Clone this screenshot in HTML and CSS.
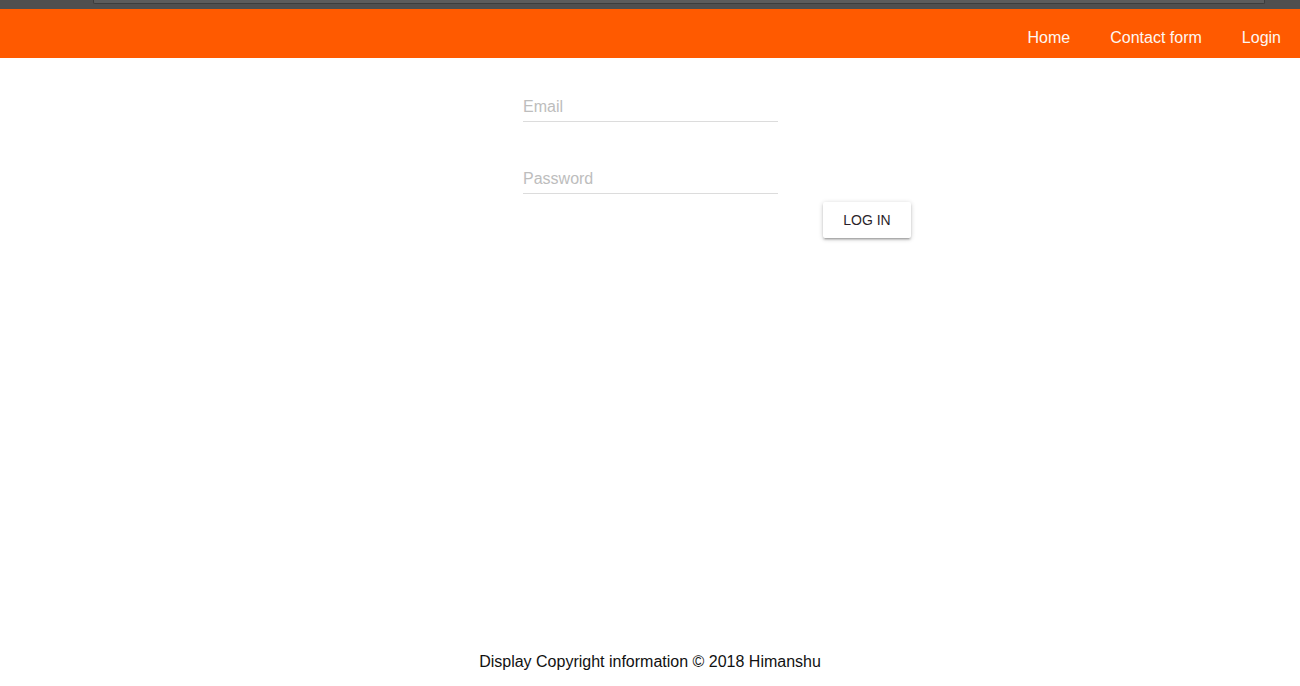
FILE: index.html
```html
<!DOCTYPE html>
<html lang="en">
<head>
<meta charset="utf-8">
<title>Login</title>
<link rel="stylesheet" href="styles.css">
</head>
<body>
<div class="page">
  <div class="chrome"><div class="chrome-bar"></div></div>
  <header class="topbar">
    <nav class="nav">
      <a class="nav-link" href="#">Home</a>
      <a class="nav-link" href="#">Contact form</a>
      <a class="nav-link" href="#">Login</a>
    </nav>
  </header>
  <main class="main">
    <form class="login-form">
      <div class="field"><input class="text-input" type="email" placeholder="Email"></div>
      <div class="field field-gap"><input class="text-input" type="password" placeholder="Password"></div>
      <div class="actions"><button class="btn" type="button">Log in</button></div>
    </form>
  </main>
  <footer class="footer">Display Copyright information © 2018 Himanshu</footer>
</div>
</body>
</html>
```
FILE: styles.css
```css
html, body {
  margin: 0;
  padding: 0;
  background: #ffffff;
  font-family: "Liberation Sans", Arial, sans-serif;
}
.page {
  display: flex;
  flex-direction: column;
  min-height: 100vh;
}
.chrome {
  height: 9px;
  background: #4f4f4f;
  padding: 0 35px 0 93px;
  box-sizing: border-box;
}
.chrome-bar {
  height: 3px;
  background: #5c5c5c;
  border: 1px solid #3d3d3d;
  border-top: none;
  border-radius: 0 0 2px 2px;
}
.topbar {
  height: 49px;
  background: #ff5a00;
  display: flex;
  justify-content: flex-end;
  align-items: center;
  padding-right: 19px;
}
.nav {
  display: flex;
  gap: 40px;
  padding-top: 14px;
  height: 38px;
  box-sizing: border-box;
}
.nav-link {
  color: #fdf7f2;
  text-decoration: none;
  font-size: 16px;
  line-height: 18px;
}
.main {
  flex: 1;
  display: flex;
  justify-content: center;
  padding-top: 31px;
  padding-left: 1px;
}
.login-form {
  width: 255px;
  margin: 0;
}
.field-gap {
  margin-top: 39px;
}
.text-input {
  display: block;
  width: 100%;
  box-sizing: border-box;
  height: 33px;
  padding: 8px 0 5px;
  border: none;
  border-bottom: 1px solid #dcdcdc;
  outline: none;
  background: transparent;
  font-family: "Liberation Sans", Arial, sans-serif;
  font-size: 16px;
  line-height: 19px;
  color: #222;
}
.text-input::placeholder {
  color: #bdbdbd;
  opacity: 1;
}
.actions {
  margin-top: 8px;
  padding-left: 300px;
}
.btn {
  width: 88px;
  height: 36px;
  border: none;
  border-radius: 2px;
  background: #ffffff;
  box-shadow: 0 1px 5px rgba(0,0,0,0.2), 0 2px 2px rgba(0,0,0,0.14), 0 3px 1px -2px rgba(0,0,0,0.12);
  font-family: "Liberation Sans", Arial, sans-serif;
  font-size: 14px;
  text-transform: uppercase;
  color: #2b1f2a;
  padding: 0;
}
.footer {
  text-align: center;
  font-size: 16px;
  line-height: 19px;
  color: #111;
  padding: 0 0 15px;
}
```
